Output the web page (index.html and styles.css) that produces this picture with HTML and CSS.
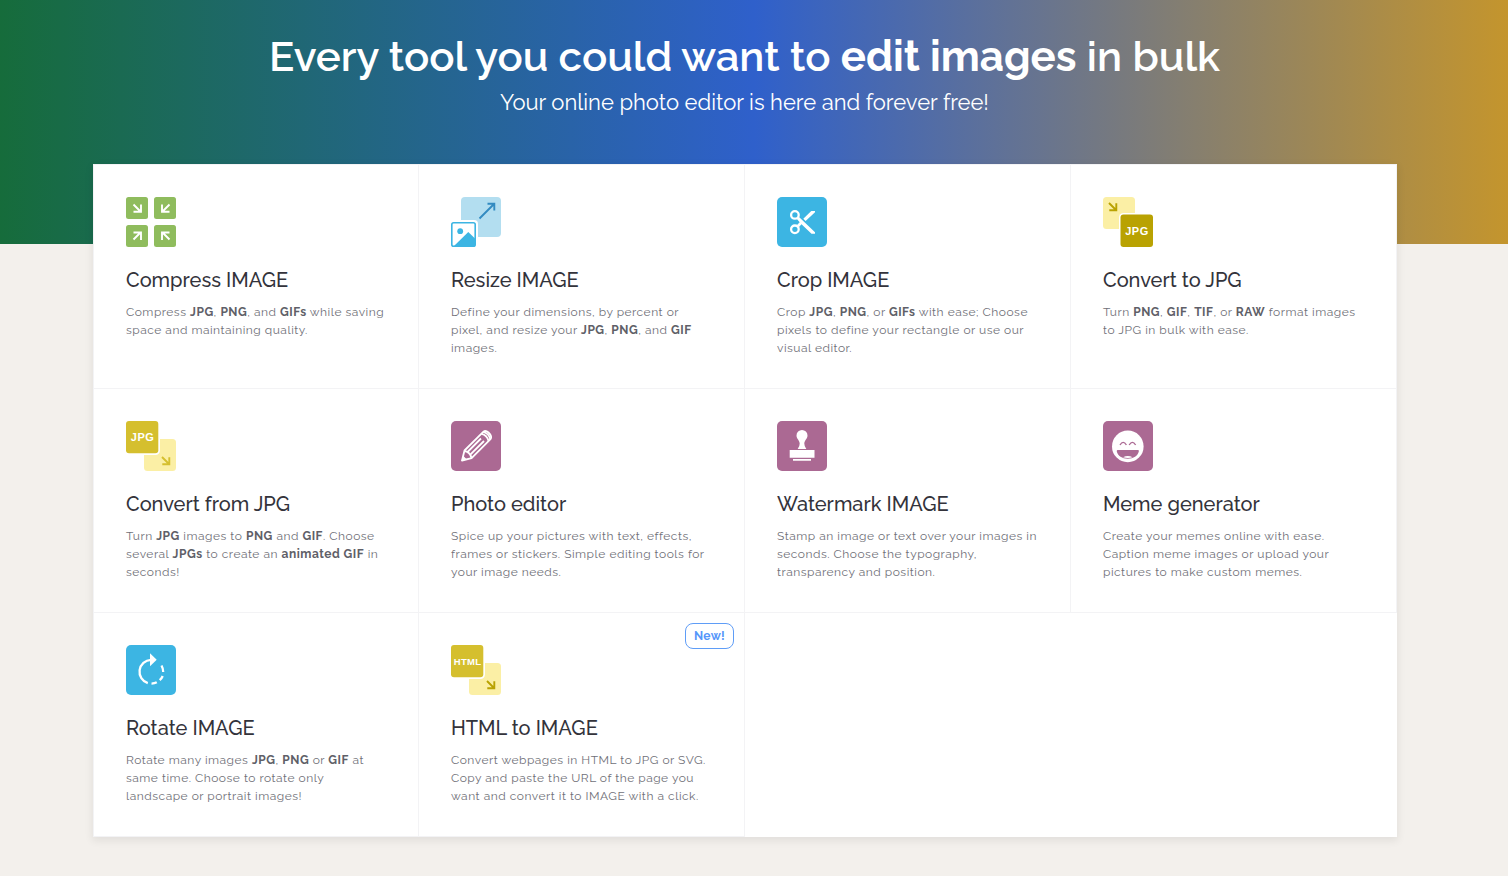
FILE: index.html
```
<!DOCTYPE html>
<html lang="en">
<head>
    <meta charset="UTF-8">
    <meta name="viewport" content="width=device-width, initial-scale=1.0">
    <title>Edit images in bulk</title>
    <link rel="stylesheet" href="styles.css">
</head>
<body>
    <header class="hero">
        <h1 class="hero-title">Every tool you could want to <strong>edit images</strong> in bulk</h1>
        <h2 class="hero-subtitle">Your online photo editor is here and forever free!</h2>
    </header>

    <main class="tools">
        <div class="tool compress">
            <svg class="icon" viewBox="0 0 50 50">
                <g fill="#8fbc5d">
                    <rect width="22" height="22" rx="2.5"/>
                    <rect x="28" width="22" height="22" rx="2.5"/>
                    <rect y="28" width="22" height="22" rx="2.5"/>
                    <rect x="28" y="28" width="22" height="22" rx="2.5"/>
                </g>
                <g fill="none" stroke="#fff" stroke-width="1.9">
                    <path d="M7.5 7.5L14.5 14.5M15 7.5V14.8H7.5"/>
                    <path d="M43.5 7.5L36.5 14.5M36 7.5V14.8H43.5"/>
                    <path d="M7.5 42.5L14.5 35.5M7.5 35.5H15V43"/>
                    <path d="M43.5 42.5L36.5 35.5M43.5 35.5H36V43"/>
                </g>
            </svg>
            <h3>Compress IMAGE</h3>
            <p>Compress <b>JPG</b>, <b>PNG</b>, and <b>GIFs</b> while saving<br>space and maintaining quality.</p>
        </div>

        <div class="tool resize">
            <svg class="icon" viewBox="0 0 50 50">
                <rect x="10" width="40" height="40" rx="4" fill="#b3def0"/>
                <path d="M28.5 21.5L43.5 6.5M36.5 6.8H43.3V13.5" fill="none" stroke="#338bc1" stroke-width="1.9"/>
                <rect x="-2" y="23" width="29" height="29" rx="4" fill="#fff"/>
                <rect x=".8" y="25.8" width="23.4" height="23.4" rx="1.8" fill="#fff" stroke="#3cb5e3" stroke-width="1.6"/>
                <circle cx="9.2" cy="34.2" r="2.9" fill="#3cb5e3"/>
                <path d="M3 49L17.3 35L24 41.5V49Z" fill="#3cb5e3"/>
            </svg>
            <h3>Resize IMAGE</h3>
            <p>Define your dimensions, by percent or<br>pixel, and resize your <b>JPG</b>, <b>PNG</b>, and <b>GIF</b><br>images.</p>
        </div>

        <div class="tool crop">
            <svg class="icon" viewBox="0 0 50 50">
                <rect width="50" height="50" rx="5" fill="#3cb5e3"/>
                <circle cx="17.9" cy="17.9" r="3.8" fill="none" stroke="#fff" stroke-width="2.3"/>
                <circle cx="17.9" cy="32.3" r="3.8" fill="none" stroke="#fff" stroke-width="2.3"/>
                <path d="M19.5 21.5L21.5 19.5L38 35.2V36.7H34.5L24.5 27.2L21.8 30.2L19.8 28.2L22.7 25.2Z" fill="#fff"/>
                <path d="M26.3 21.7L34.3 14H38V15.3L28.6 24Z" fill="#fff"/>
            </svg>
            <h3>Crop IMAGE</h3>
            <p>Crop <b>JPG</b>, <b>PNG</b>, or <b>GIFs</b> with ease; Choose<br>pixels to define your rectangle or use our<br>visual editor.</p>
        </div>

        <div class="tool to-jpg">
            <svg class="icon" viewBox="0 0 50 50">
                <rect width="32" height="32" rx="3.5" fill="#fbefa5"/>
                <path d="M6 6L13 13M13.3 6.3V13.3H6.3" fill="none" stroke="#b9a202" stroke-width="1.9"/>
                <rect x="16" y="16" width="36" height="36" rx="4.5" fill="#fff"/>
                <rect x="17.5" y="17.5" width="32.5" height="32.5" rx="3" fill="#b9a202"/>
                <text class="icon-label" x="33.7" y="37.7" textLength="23">JPG</text>
            </svg>
            <h3>Convert to JPG</h3>
            <p>Turn <b>PNG</b>, <b>GIF</b>, <b>TIF</b>, or <b>RAW</b> format images<br>to JPG in bulk with ease.</p>
        </div>

        <div class="tool from-jpg">
            <svg class="icon" viewBox="0 0 50 50">
                <rect x="18" y="18" width="32" height="32" rx="3.5" fill="#fbefa5"/>
                <path d="M36 36L43 43M43.3 36.3V43.3H36.3" fill="none" stroke="#d5bf2e" stroke-width="1.9"/>
                <rect x="-2" y="-2" width="36" height="36" rx="4.5" fill="#fff"/>
                <rect width="32.3" height="32.3" rx="3" fill="#d5bf2e"/>
                <text class="icon-label" x="16.3" y="20.2" textLength="23">JPG</text>
            </svg>
            <h3>Convert from JPG</h3>
            <p>Turn <b>JPG</b> images to <b>PNG</b> and <b>GIF</b>. Choose<br>several <b>JPGs</b> to create an <b>animated GIF</b> in<br>seconds!</p>
        </div>

        <div class="tool editor">
            <svg class="icon" viewBox="0 0 50 50">
                <rect width="50" height="50" rx="5" fill="#ab6993"/>
                <g fill="none" stroke="#fff" stroke-width="1.8" stroke-linejoin="round">
                    <path d="M11 39.5L13.5 29.5L32.5 10.6Q34.5 9 37.500 11.500Q41.500 15.500 39.500 18.200L20.600 37.200Z"/>
                    <path d="M30.500 12.800Q36 14 37.600 20"/>
                    <path d="M32.300 11Q38 12.500 39.300 18.300"/>
                    <path d="M13.800 30Q19 31 20.400 36.900"/>
                    <path d="M16.500 31L30 17.500M19.300 33.700L33 20"/>
                </g>
                <path d="M10.5 40L12 34.5L15.8 38.5Z" fill="#fff"/>
            </svg>
            <h3>Photo editor</h3>
            <p>Spice up your pictures with text, effects,<br>frames or stickers. Simple editing tools for<br>your image needs.</p>
        </div>

        <div class="tool watermark">
            <svg class="icon" viewBox="0 0 50 50">
                <rect width="50" height="50" rx="5" fill="#ab6993"/>
                <path d="M25 9A5.5 5.5 0 0 1 30.5 14.5C30.5 18 27.3 19.3 27.3 22.5Q27.3 25.500 29.300 28H20.700Q22.700 25.500 22.700 22.500C22.700 19.300 19.500 18 19.500 14.500A5.500 5.500 0 0 1 25 9Z" fill="#fff"/>
                <path d="M12.7 29H37.5V36.8H12.7ZM16 38H34V39.7H16Z" fill="#fff"/>
            </svg>
            <h3>Watermark IMAGE</h3>
            <p>Stamp an image or text over your images in<br>seconds. Choose the typography,<br>transparency and position.</p>
        </div>

        <div class="tool meme">
            <svg class="icon" viewBox="0 0 50 50">
                <rect width="50" height="50" rx="5" fill="#ab6993"/>
                <circle cx="24.8" cy="25.4" r="15.8" fill="#fff"/>
                <path d="M17 24Q20.200 18.700 23.400 24M26.200 24Q29.400 18.700 32.600 24" fill="none" stroke="#ab6993" stroke-width="1.4"/>
                <path d="M14.500 29H35.200Q36.200 29 35.800 30.500C34.800 35 30.500 37.700 24.800 37.700S14.800 35 13.800 30.500Q13.500 29 14.500 29Z" fill="#ab6993"/>
                <path d="M20 36.300Q24.800 33.500 29.600 36.300Q24.800 37.500 20 36.300Z" fill="#fff"/>
            </svg>
            <h3>Meme generator</h3>
            <p>Create your memes online with ease.<br>Caption meme images or upload your<br>pictures to make custom memes.</p>
        </div>

        <div class="tool rotate">
            <svg class="icon" viewBox="0 0 50 50">
                <rect width="50" height="50" rx="5" fill="#3cb5e3"/>
                <g fill="none" stroke="#fff" stroke-width="2.3">
                    <path d="M25 14.8A12 12 0 0 0 21.8 38.2"/>
                    <path d="M25.5 38.6Q28.500 38.600 30.800 37.300M33.700 35.200Q35.800 33.300 36.700 31M37.200 27Q37.200 23.500 35.500 20.500"/>
                </g>
                <path d="M24 8.300L30.700 14.800L24 21.200Z" fill="#fff"/>
            </svg>
            <h3>Rotate IMAGE</h3>
            <p>Rotate many images <b>JPG</b>, <b>PNG</b> or <b>GIF</b> at<br>same time. Choose to rotate only<br>landscape or portrait images!</p>
        </div>

        <div class="tool html">
            <span class="badge">New!</span>
            <svg class="icon" viewBox="0 0 50 50">
                <rect x="18" y="18" width="32" height="32" rx="3.5" fill="#fbefa5"/>
                <path d="M36 36L43 43M43.3 36.3V43.3H36.3" fill="none" stroke="#b9a202" stroke-width="1.9"/>
                <rect x="-2" y="-2" width="36" height="36" rx="4.5" fill="#fff"/>
                <rect width="32.3" height="32.3" rx="3" fill="#d5bf2e"/>
                <text class="icon-label small" x="16.4" y="19.6" textLength="27.5">HTML</text>
            </svg>
            <h3>HTML to IMAGE</h3>
            <p>Convert webpages in HTML to JPG or SVG.<br>Copy and paste the URL of the page you<br>want and convert it to IMAGE with a click.</p>
        </div>
    </main>
</body>
</html>
```
FILE: styles.css
```
* {
    box-sizing: border-box;
}
body {
    margin: 0;
    min-height: 100vh;
    font-family: Raleway, Lato, sans-serif;
    background: #f3f0ec;
    color: #33333b;
}
.hero {
    height: 244px;
    padding: 31px 19px 0 0;
    text-align: center;
    color: #fff;
    background: linear-gradient(90deg, #166c3b 0%, #2f60cb 50%, #c4952d 100%);
}
.hero-title {
    margin: 0;
    font-size: 42px;
    line-height: 52px;
    font-weight: 600;
}
.hero-title strong {
    font-weight: 700;
}
.hero-subtitle {
    margin: 3px 0 0;
    font-size: 22px;
    line-height: 32px;
    font-weight: 400;
}
.tools {
    display: grid;
    grid-template-columns: 325px repeat(3, 326px);
    grid-auto-rows: 224px;
    width: 1304px;
    margin: -80px 0 0 93px;
    background: #fff;
    border-top: 1px solid #f3f3f5;
    border-left: 1px solid #f3f3f5;
    box-shadow: 0 3px 8px 1px rgba(0, 0, 0, 0.07);
}
.tool {
    position: relative;
    padding: 32px 20px 0 32px;
    border-right: 1px solid #f3f3f5;
    border-bottom: 1px solid #f3f3f5;
}
.icon {
    display: block;
    width: 50px;
    height: 50px;
    overflow: visible;
}
.icon-label {
    font-family: "Liberation Sans", sans-serif;
    font-size: 11px;
    font-weight: 700;
    text-anchor: middle;
    fill: #fff;
}
.icon-label.small {
    font-size: 9.5px;
}
.tool h3 {
    margin: 19px 0 9px;
    font-size: 20px;
    line-height: 28px;
    font-weight: 500;
    white-space: nowrap;
}
.tool p {
    margin: 0;
    font-size: 12px;
    line-height: 18px;
    letter-spacing: 0.5px;
    color: #707078;
    white-space: nowrap;
}
.tool b {
    color: #5f5f68;
}
.badge {
    position: absolute;
    top: 10px;
    right: 10px;
    width: 49px;
    height: 26px;
    border: 1px solid #5f9df7;
    border-radius: 8px;
    font-size: 12px;
    line-height: 25px;
    font-weight: 700;
    letter-spacing: 0.3px;
    text-align: center;
    color: #5596fa;
}
```
